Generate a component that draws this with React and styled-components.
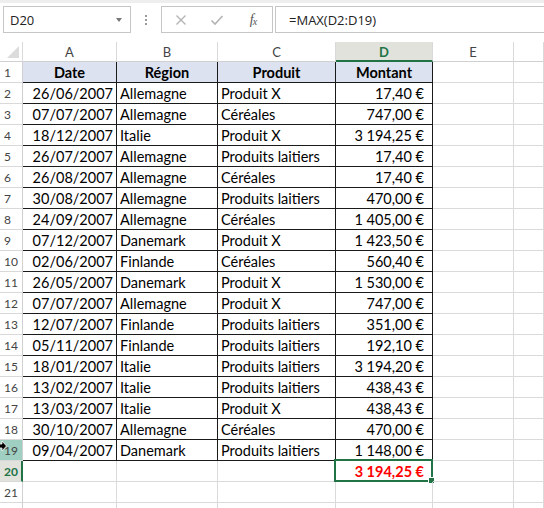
import React from "react";
import styled, { createGlobalStyle } from "styled-components";

const GlobalStyle = createGlobalStyle`
  html, body {
    margin: 0;
    padding: 0;
    background: #ffffff;
    overflow: hidden;
  }
  body {
    font-family: "Lato", "Liberation Sans", sans-serif;
  }
`;

const COLS = "23px 94px 101px 118px 97px 81px 1fr";

const rows = [
  ["26/06/2007", "Allemagne", "Produit X", "17,40 €"],
  ["07/07/2007", "Allemagne", "Céréales", "747,00 €"],
  ["18/12/2007", "Italie", "Produit X", "3 194,25 €"],
  ["26/07/2007", "Allemagne", "Produits laitiers", "17,40 €"],
  ["26/08/2007", "Allemagne", "Céréales", "17,40 €"],
  ["30/08/2007", "Allemagne", "Produits laitiers", "470,00 €"],
  ["24/09/2007", "Allemagne", "Céréales", "1 405,00 €"],
  ["07/12/2007", "Danemark", "Produit X", "1 423,50 €"],
  ["02/06/2007", "Finlande", "Céréales", "560,40 €"],
  ["26/05/2007", "Danemark", "Produit X", "1 530,00 €"],
  ["07/07/2007", "Allemagne", "Produit X", "747,00 €"],
  ["12/07/2007", "Finlande", "Produits laitiers", "351,00 €"],
  ["05/11/2007", "Finlande", "Produits laitiers", "192,10 €"],
  ["18/01/2007", "Italie", "Produits laitiers", "3 194,20 €"],
  ["13/02/2007", "Italie", "Produits laitiers", "438,43 €"],
  ["13/03/2007", "Italie", "Produit X", "438,43 €"],
  ["30/10/2007", "Allemagne", "Céréales", "470,00 €"],
  ["09/04/2007", "Danemark", "Produits laitiers", "1 148,00 €"],
];

/* formula bar */
const Toolbar = styled.div`
  display: flex;
  align-items: flex-start;
  height: 42px;
  border-top: 3px solid #eeeeee;
  padding: 3px 0 0 3px;
  box-sizing: border-box;
  font-family: "Open Sans", "Liberation Sans", sans-serif;
  font-size: 13px;
  color: #222;
`;

const Box = styled.div`
  display: flex;
  align-items: center;
  box-sizing: border-box;
  height: 27px;
  border: 1px solid #c6c6c6;
  background: #fff;
  width: ${(p) => p.$w || "auto"};
  flex: ${(p) => (p.$grow ? 1 : "none")};
  padding: ${(p) => p.$pad || "0"};
  margin-right: ${(p) => p.$mr || "0"};
`;

const NameText = styled.span`
  flex: 1;
`;

const Dots = styled.div`
  width: 30px;
  height: 27px;
  display: flex;
  flex-direction: column;
  justify-content: center;
  align-items: center;
  gap: 2px;
  span {
    width: 2px;
    height: 2px;
    background: #9a9a9a;
  }
`;

const IconSlot = styled.div`
  width: ${(p) => p.$w}px;
  display: flex;
  justify-content: center;
  align-items: center;
`;

const Fx = styled.span`
  font-family: "Liberation Serif", serif;
  font-style: italic;
  font-size: 14px;
  color: #555;
  letter-spacing: -1px;
  sub {
    font-size: 10px;
    vertical-align: -1px;
  }
`;

/* sheet grid */
const Sheet = styled.div`
  position: relative;
  font-family: "Lato", "Liberation Sans", sans-serif;
  font-size: 14.5px;
  color: #000;
`;

const Row = styled.div`
  display: grid;
  grid-template-columns: ${COLS};
  height: ${(p) => p.$h || 21}px;
`;

const ColHead = styled.div`
  box-sizing: border-box;
  display: flex;
  align-items: center;
  justify-content: center;
  font-size: 13px;
  color: ${(p) => (p.$active ? "#217346" : "#444")};
  font-weight: ${(p) => (p.$active ? 700 : 400)};
  background: ${(p) => (p.$active ? "#e1e2dc" : "#fff")};
  border-right: 1px solid #d9d9d9;
  border-bottom: ${(p) => (p.$active ? "2px solid #217346" : "1px solid #d0d0d0")};
  padding-top: ${(p) => (p.$active ? "1px" : "0")};
`;

const Corner = styled.div`
  box-sizing: border-box;
  position: relative;
  border-right: 1px solid #d9d9d9;
  border-bottom: 1px solid #d0d0d0;
  &::after {
    content: "";
    position: absolute;
    right: 3px;
    bottom: 3px;
    border-left: 12px solid transparent;
    border-bottom: 12px solid #dcdcdc;
  }
`;

const RowHead = styled.div`
  box-sizing: border-box;
  display: flex;
  align-items: center;
  padding-left: 4px;
  font-size: 12px;
  color: ${(p) => (p.$active ? "#217346" : "#444")};
  font-weight: ${(p) => (p.$active ? 700 : 400)};
  background: ${(p) => (p.$active ? "#e1e2dc" : p.$hover ? "#9fcfc1" : "#fff")};
  border-right: ${(p) => (p.$active ? "2px solid #217346" : "1px solid #d0d0d0")};
  border-bottom: 1px solid #d9d9d9;
`;

const Cell = styled.div`
  box-sizing: border-box;
  display: flex;
  align-items: center;
  justify-content: ${(p) => (p.$align === "right" ? "flex-end" : p.$align === "center" ? "center" : "flex-start")};
  padding: 0 ${(p) => p.$pr || 3}px 0 3px;
  white-space: nowrap;
  overflow: visible;
  position: relative;
  font-weight: ${(p) => (p.$bold ? 700 : 400)};
  background: ${(p) => (p.$head ? "#dce2ef" : "transparent")};
  color: ${(p) => (p.$red ? "#ff0000" : "#000")};
  border-right: 1px solid ${(p) => (p.$table ? "#1a1a1a" : "#dadada")};
  border-bottom: 1px solid ${(p) => (p.$table ? "#1a1a1a" : "#dadada")};
`;

const Selection = styled.div`
  position: absolute;
  left: -2px;
  top: -2px;
  right: -1px;
  bottom: -1px;
  border: 2px solid #217346;
  pointer-events: none;
  &::after {
    content: "";
    position: absolute;
    right: -4px;
    bottom: -4px;
    width: 5px;
    height: 5px;
    background: #217346;
    border: 1px solid #fff;
  }
`;

const Cursor = styled.svg`
  position: absolute;
  left: -3px;
  top: 398px;
`;

const EmptyCells = ({ n }) =>
  Array.from({ length: n }, (_, i) => <Cell key={i} />);

export default function App() {
  return (
    <>
      <GlobalStyle />
      <Toolbar>
        <Box $w="128px" $pad="0 0 0 6px">
          <NameText>D20</NameText>
          <svg width="20" height="10" viewBox="0 0 20 10">
            <path d="M6 3 L12 3 L9 7 Z" fill="#777" />
          </svg>
        </Box>
        <Dots>
          <span />
          <span />
          <span />
        </Dots>
        <Box $w="112px" $mr="2px">
          <IconSlot $w={38}>
            <svg width="12" height="12" viewBox="0 0 12 12">
              <path d="M1.5 1.5 L10.5 10.5 M10.5 1.5 L1.5 10.5" stroke="#b4b4b4" strokeWidth="1.4" />
            </svg>
          </IconSlot>
          <IconSlot $w={34}>
            <svg width="14" height="12" viewBox="0 0 14 12">
              <path d="M1.5 6.5 L5 10 L12.5 2" stroke="#b4b4b4" strokeWidth="1.6" fill="none" />
            </svg>
          </IconSlot>
          <IconSlot $w={38}>
            <Fx>f<sub>x</sub></Fx>
          </IconSlot>
        </Box>
        <Box $grow $pad="0 0 0 13px" style={{ marginRight: "-2px" }}>
          =MAX(D2:D19)
        </Box>
      </Toolbar>

      <Sheet>
        <Row $h={20}>
          <Corner />
          <ColHead>A</ColHead>
          <ColHead>B</ColHead>
          <ColHead>C</ColHead>
          <ColHead $active>D</ColHead>
          <ColHead>E</ColHead>
          <ColHead />
        </Row>

        <Row>
          <RowHead>1</RowHead>
          <Cell $table $head $bold $align="center">Date</Cell>
          <Cell $table $head $bold $align="center">Région</Cell>
          <Cell $table $head $bold $align="center">Produit</Cell>
          <Cell $table $head $bold $align="center">Montant</Cell>
          <EmptyCells n={2} />
        </Row>

        {rows.map((r, i) => (
          <Row key={i}>
            <RowHead $hover={i === 17}>{i + 2}</RowHead>
            <Cell $table $align="right">{r[0]}</Cell>
            <Cell $table>{r[1]}</Cell>
            <Cell $table>{r[2]}</Cell>
            <Cell $table $align="right" $pr={8}>{r[3]}</Cell>
            <EmptyCells n={2} />
          </Row>
        ))}

        <Row>
          <RowHead $active>20</RowHead>
          <EmptyCells n={3} />
          <Cell $align="right" $pr={8} $bold $red>
            3 194,25 €
            <Selection />
          </Cell>
          <EmptyCells n={2} />
        </Row>

        <Row>
          <RowHead>21</RowHead>
          <EmptyCells n={6} />
        </Row>

        <Row>
          <RowHead>22</RowHead>
          <EmptyCells n={6} />
        </Row>

        <Cursor width="10" height="12" viewBox="0 0 10 12">
          <path d="M0 4 L5 4 L5 1 L9.5 6 L5 11 L5 8 L0 8 Z" fill="#000" stroke="#fff" strokeWidth="0.8" />
        </Cursor>
      </Sheet>
    </>
  );
}
